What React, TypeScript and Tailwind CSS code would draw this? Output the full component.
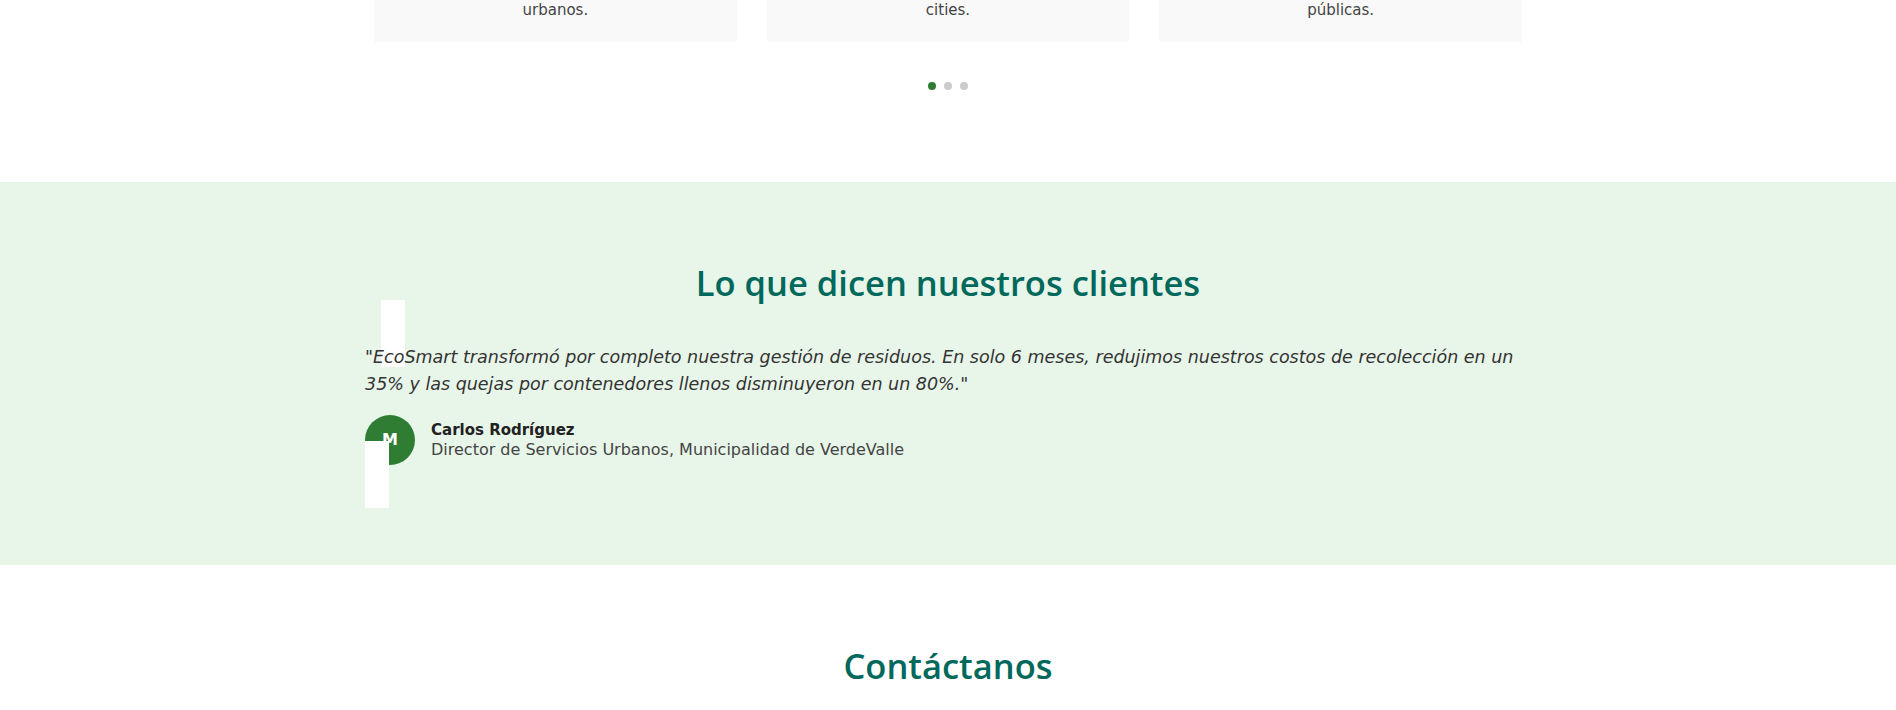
const cards = ["urbanos.", "cities.", "públicas."];

const Dots = () => (
	<div className="mt-10 flex justify-center gap-2">
		<span className="h-2 w-2 rounded-full bg-[#2e7d32]" />
		<span className="h-2 w-2 rounded-full bg-[#cccccc]" />
		<span className="h-2 w-2 rounded-full bg-[#cccccc]" />
	</div>
);

const headingClass =
	"text-center font-['Open_Sans',sans-serif] text-[34.5px] font-semibold leading-[42px] text-[#00695c]";

export default function App() {
	return (
		<div className="h-[710px] overflow-hidden bg-white font-['DejaVu_Sans',sans-serif]">
			{/* servicios (final de la sección) */}
			<section className="pb-[92px]">
				<div className="mx-auto w-[1148px]">
					<div className="grid grid-cols-3 gap-[30px]">
						{cards.map((text) => (
							<div key={text} className="bg-[#f9f9f9] px-5 pb-5 text-center">
								<p className="-mt-[2px] text-[15px] leading-6 text-[#444]">{text}</p>
							</div>
						))}
					</div>
					<Dots />
				</div>
			</section>

			{/* testimonios */}
			<section className="bg-[#e8f5e9] py-20">
				<h2 className={`mb-10 ${headingClass}`}>Lo que dicen nuestros clientes</h2>
				<div className="relative mx-auto w-[1166px] pb-5">
					<span className="absolute left-4 top-[-44px] h-[67px] w-6 bg-white" />
					<p className="relative mt-px whitespace-nowrap text-[17.5px] italic leading-[27px] text-[#333]">
						"EcoSmart transformó por completo nuestra gestión de residuos. En solo 6 meses, redujimos nuestros costos de recolección en un
						<br />
						35% y las quejas por contenedores llenos disminuyeron en un 80%."
					</p>
					<div className="mt-[17px] flex items-center gap-4">
						<div className="flex h-[50px] w-[50px] items-center justify-center rounded-full bg-[#2e7d32] text-base font-bold text-white">
							M
						</div>
						<div>
							<p className="text-[15px] font-bold leading-5 text-[#222]">Carlos Rodríguez</p>
							<p className="text-base leading-5 text-[#444]">
								Director de Servicios Urbanos, Municipalidad de VerdeValle
							</p>
						</div>
					</div>
					<span className="absolute left-0 top-[97px] h-[67px] w-6 bg-white" />
				</div>
			</section>

			{/* contacto */}
			<section className="pt-20">
				<h2 className={headingClass}>Contáctanos</h2>
			</section>
		</div>
	);
}
